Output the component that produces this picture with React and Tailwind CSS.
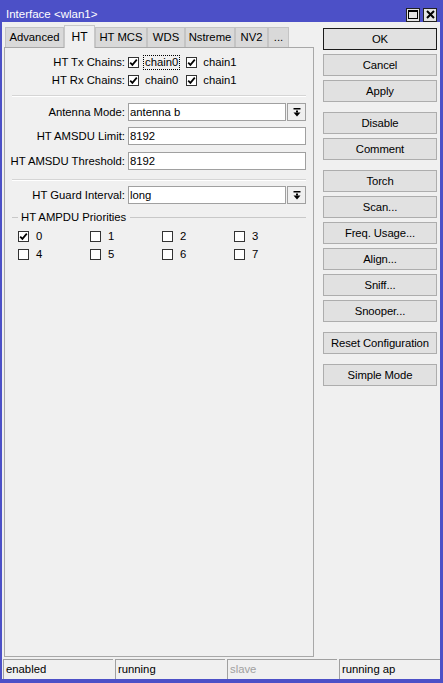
import React from "react";

const F = "font-['Liberation_Sans',Arial,sans-serif]";

function Check({ checked }) {
  return (
    <span className="w-[11px] h-[11px] border border-[#333333] bg-white flex items-center justify-center shrink-0">
      {checked && (
        <svg width="9" height="9" viewBox="0 0 9 9">
          <path d="M1.2 4.6 L3.4 6.9 L7.8 1.6" stroke="#000" strokeWidth="1.7" fill="none" />
        </svg>
      )}
    </span>
  );
}

function DropArrow() {
  return (
    <svg width="8" height="9" viewBox="0 0 8 9">
      <rect x="0.5" y="0" width="7" height="1.5" fill="#000" />
      <rect x="3" y="2.5" width="2" height="2" fill="#000" />
      <path d="M0.5 4.5 H7.5 L4 8.5 Z" fill="#000" />
    </svg>
  );
}

function Tab({ label, w, selected }) {
  if (selected) {
    return (
      <div
        className={`h-[23px] ${w} bg-[#f0f0f0] border-t border-l border-r border-[#c8c8c8] flex items-center justify-center text-[12px] text-black relative z-10 -mb-px`}
      >
        {label}
      </div>
    );
  }
  return (
    <div
      className={`h-[20px] ${w} bg-[#d9d9d9] border-t border-l border-r border-[#c4c4c4] flex items-center justify-center text-[11.3px] text-black`}
    >
      {label}
    </div>
  );
}

function Btn({ label, primary, mt }) {
  return (
    <div
      className={`h-[22px] w-[114px] ${mt} bg-[#e1e1e1] border ${
        primary ? "border-[#1a1a1a]" : "border-[#adadad]"
      } flex items-center justify-center text-[11.3px] tracking-[-0.1px] text-black`}
    >
      {label}
    </div>
  );
}

function Label({ children }) {
  return <div className="w-[120px] text-right text-[11.3px] text-black whitespace-nowrap">{children}</div>;
}

function Field({ value, dropdown, mt }) {
  return (
    <div className={`flex items-center h-[18px] ${mt}`}>
      {dropdown ? (
        <>
          <div className="ml-[3px] w-[158px] h-[18px] bg-white border border-[#a0a0a0] flex items-center pl-[1px] text-[11.3px] text-black">
            {value}
          </div>
          <div className="ml-[1px] w-[19px] h-[18px] bg-[#f0f0f0] border border-[#a0a0a0] flex items-center justify-center">
            <DropArrow />
          </div>
        </>
      ) : (
        <div className="ml-[3px] w-[178px] h-[18px] bg-white border border-[#a0a0a0] flex items-center pl-[1px] text-[11.3px] text-black">
          {value}
        </div>
      )}
    </div>
  );
}

function Sep({ mt }) {
  return <div className={`${mt} ml-[7px] w-[294px] h-[2px] border-t border-[#d5d5d5] border-b border-b-white`} />;
}

export default function App() {
  const tabs = [
    ["Advanced", "w-[59px]"],
    ["HT", "w-[31px]", true],
    ["HT MCS", "w-[52px]"],
    ["WDS", "w-[38px]"],
    ["Nstreme", "w-[50px]"],
    ["NV2", "w-[33px]"],
    ["...", "w-[21px]"],
  ];
  const prios = ["0", "1", "2", "3", "4", "5", "6", "7"];
  return (
    <div className={`w-[443px] h-[683px] bg-[#4c50c7] flex flex-col ${F}`}>
      {/* title bar */}
      <div className="h-[22px] flex items-center pt-[7px] pl-[6px] pr-[6px] shrink-0">
        <div className="text-white text-[11.5px] flex-1 leading-none">Interface &lt;wlan1&gt;</div>
        <div className="flex gap-[3px]">
          <div className="w-[14px] h-[14px] bg-[#e4e4e4] border border-[#222] flex items-center justify-center">
            <div className="w-[10px] h-[9px] border border-black border-t-2" />
          </div>
          <div className="w-[14px] h-[14px] bg-[#e4e4e4] border border-[#222] flex items-center justify-center">
            <svg width="9" height="9" viewBox="0 0 9 9">
              <path d="M1 1 L8 8 M8 1 L1 8" stroke="#000" strokeWidth="2" />
            </svg>
          </div>
        </div>
      </div>

      {/* content */}
      <div className="flex-1 ml-[2px] mr-[3px] mb-[4px] bg-[#f0f0f0] flex flex-col">
        <div className="flex">
          {/* left column */}
          <div className="ml-[2px] w-[310px] flex flex-col">
            <div className="h-[25px] flex items-end ml-[1px]">
              {tabs.map(([l, w, s]) => (
                <Tab key={l} label={l} w={w} selected={s} />
              ))}
            </div>
            <div className="h-[610px] border border-[#a8a8a8] bg-[#f0f0f0] flex flex-col pt-[5px]">
              {/* Tx */}
              <div className="flex items-center h-[18px]">
                <Label>HT Tx Chains:</Label>
                <div className="ml-[3px] flex items-center">
                  <Check checked />
                  <span className="ml-[4px] border border-dotted border-black px-[1px] text-[11.3px] leading-[13px] text-black">
                    chain0
                  </span>
                  <span className="ml-[6px]">
                    <Check checked />
                  </span>
                  <span className="ml-[6px] text-[11.3px] text-black">chain1</span>
                </div>
              </div>
              {/* Rx */}
              <div className="flex items-center h-[18px]">
                <Label>HT Rx Chains:</Label>
                <div className="ml-[3px] flex items-center">
                  <Check checked />
                  <span className="ml-[4px] border border-transparent px-[1px] text-[11.3px] leading-[13px] text-black">
                    chain0
                  </span>
                  <span className="ml-[6px]">
                    <Check checked />
                  </span>
                  <span className="ml-[6px] text-[11.3px] text-black">chain1</span>
                </div>
              </div>

              <Sep mt="mt-[6px]" />

              <div className="flex items-center mt-[6px]">
                <Label>Antenna Mode:</Label>
                <Field value="antenna b" dropdown />
              </div>
              <div className="flex items-center mt-[6px]">
                <Label>HT AMSDU Limit:</Label>
                <Field value="8192" />
              </div>
              <div className="flex items-center mt-[7px]">
                <Label>HT AMSDU Threshold:</Label>
                <Field value="8192" />
              </div>

              <Sep mt="mt-[9px]" />

              <div className="flex items-center mt-[5px]">
                <Label>HT Guard Interval:</Label>
                <Field value="long" dropdown />
              </div>

              {/* group */}
              <div className="mt-[6px] h-[14px] flex items-center">
                <div className="ml-[7px] w-[6px] border-t border-[#c8c8c8]" />
                <span className="ml-[3px] text-[11.3px] text-black">HT AMPDU Priorities</span>
                <div className="ml-[4px] flex-1 mr-[7px] border-t border-[#c8c8c8]" />
              </div>
              <div className="mt-[3px] ml-[13px] grid grid-cols-[72px_72px_72px_72px]">
                {prios.map((p) => (
                  <div key={p} className="h-[18px] flex items-center">
                    <Check checked={p === "0"} />
                    <span className="ml-[7px] text-[11.3px] text-black">{p}</span>
                  </div>
                ))}
              </div>
            </div>
          </div>

          {/* right column buttons */}
          <div className="ml-[9px] pt-[6px] flex flex-col">
            <Btn label="OK" primary />
            <Btn label="Cancel" mt="mt-[4px]" />
            <Btn label="Apply" mt="mt-[4px]" />
            <Btn label="Disable" mt="mt-[10px]" />
            <Btn label="Comment" mt="mt-[4px]" />
            <Btn label="Torch" mt="mt-[10px]" />
            <Btn label="Scan..." mt="mt-[4px]" />
            <Btn label="Freq. Usage..." mt="mt-[4px]" />
            <Btn label="Align..." mt="mt-[4px]" />
            <Btn label="Sniff..." mt="mt-[4px]" />
            <Btn label="Snooper..." mt="mt-[4px]" />
            <Btn label="Reset Configuration" mt="mt-[10px]" />
            <Btn label="Simple Mode" mt="mt-[10px]" />
          </div>
        </div>

        {/* status bar */}
        <div className="mt-[2px] h-[20px] flex ml-[1px] gap-[2px]">
          {[
            ["enabled", "w-[110px]", "text-black"],
            ["running", "w-[110px]", "text-black"],
            ["slave", "w-[110px]", "text-[#a0a0a0]"],
            ["running ap", "flex-1", "text-black"],
          ].map(([t, w, c]) => (
            <div
              key={t}
              className={`${w} h-[20px] border-t border-l border-[#a0a0a0] flex items-center pl-[2px] text-[11.3px] ${c}`}
            >
              {t}
            </div>
          ))}
        </div>
      </div>
    </div>
  );
}
